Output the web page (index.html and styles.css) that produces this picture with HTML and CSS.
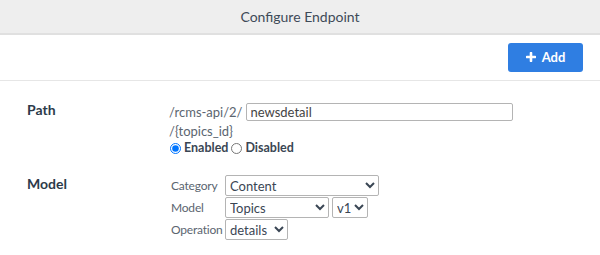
FILE: index.html
```html
<!DOCTYPE html>
<html lang="en">
  <head>
    <meta charset="UTF-8" />
    <meta name="viewport" content="width=device-width, initial-scale=1.0" />
    <title>Configure Endpoint</title>
    <link rel="stylesheet" href="styles.css">
  </head>
  <body>
    <div class="header">Configure Endpoint</div>

    <div class="toolbar">
      <button class="add-button">
        <svg class="plus" width="10" height="10" viewBox="0 0 10 10">
          <path d="M5 1v8M1 5h8" stroke="#fff" stroke-width="2.6" stroke-linecap="round" />
        </svg>
        Add
      </button>
    </div>

    <div class="form">
      <div class="form-row">
        <div class="form-label">Path</div>
        <div class="form-value">
          <div class="path-line">
            <span class="prefix">/rcms-api/2/</span>
            <input type="text" class="path-input" value="newsdetail" />
          </div>
          <div class="prefix topics-line">/{topics_id}</div>
          <div class="radio-line">
            <label><input type="radio" name="status" checked /> Enabled</label>
            <label><input type="radio" name="status" /> Disabled</label>
          </div>
        </div>
      </div>

      <div class="form-row model-row">
        <div class="form-label">Model</div>
        <div class="form-value">
          <div class="select-grid">
            <span class="select-label">Category</span>
            <div>
              <select class="select-category">
                <option>Content</option>
              </select>
            </div>
            <span class="select-label">Model</span>
            <div class="select-pair">
              <select class="select-model">
                <option>Topics</option>
              </select>
              <select class="select-version">
                <option>v1</option>
              </select>
            </div>
            <span class="select-label">Operation</span>
            <div>
              <select class="select-operation">
                <option>details</option>
              </select>
            </div>
          </div>
        </div>
      </div>
    </div>
  </body>
</html>
```

FILE: styles.css
```css
body {
  margin: 0;
  font-family: Lato, "Noto Sans", sans-serif;
  color: #34404e;
  background-color: white;
}
.header {
  height: 33px;
  line-height: 33px;
  text-align: center;
  font-size: 14px;
  color: #3e4a58;
  background-color: #eeeeee;
  border-bottom: 2px solid #e0e0e0;
}
.toolbar {
  display: flex;
  justify-content: flex-end;
  align-items: center;
  height: 45px;
  padding-right: 17px;
  border-bottom: 1px solid #e6e6e6;
}
.add-button {
  display: flex;
  align-items: center;
  justify-content: center;
  gap: 6px;
  width: 75px;
  height: 29px;
  margin-top: -1px;
  border: none;
  border-radius: 3px;
  background-color: #2f7ee2;
  color: white;
  font-family: inherit;
  font-size: 13px;
  font-weight: bold;
}
.form {
  padding: 22px 0 0 27px;
}
.form-row {
  display: flex;
}
.model-row {
  margin-top: 19px;
}
.form-label {
  width: 142px;
  font-size: 14px;
  line-height: 14px;
  font-weight: bold;
  color: #2c3a4a;
}
.model-row .form-label {
  padding-top: 2px;
}
.form-value {
  font-size: 13px;
  line-height: 17px;
}
.prefix {
  color: #5b6570;
}
.path-line {
  display: flex;
  align-items: center;
  gap: 3px;
  height: 18px;
}
.topics-line {
  margin-top: 2px;
}
.path-input {
  width: 267px;
  height: 18px;
  box-sizing: border-box;
  padding: 0 4px;
  border: 1px solid #b4b4b4;
  border-radius: 2px;
  font-family: inherit;
  font-size: 13px;
  color: #444;
}
.radio-line {
  display: flex;
  gap: 2px;
  font-size: 12.5px;
  line-height: 16px;
  font-weight: bold;
  color: #3a4654;
}
.radio-line label {
  display: flex;
  align-items: center;
}
.radio-line input {
  margin: 0 3px 0 1px;
  width: 11px;
  height: 11px;
}
.select-grid {
  display: grid;
  grid-template-columns: 54px auto;
  justify-content: start;
  row-gap: 1px;
  align-items: center;
  margin-left: 2px;
}
.select-label {
  font-size: 12px;
  letter-spacing: -0.2px;
  white-space: nowrap;
  color: #5b6570;
}
.select-pair {
  display: flex;
  gap: 3px;
}
select {
  height: 21px;
  font-family: inherit;
  font-size: 13px;
  color: #3a4654;
  border: 1px solid #b4b4b4;
  border-radius: 2px;
  background-color: white;
}
.select-category {
  width: 154px;
}
.select-model {
  width: 104px;
}
.select-version {
  width: 36px;
}
.select-operation {
  width: 63px;
}
```
